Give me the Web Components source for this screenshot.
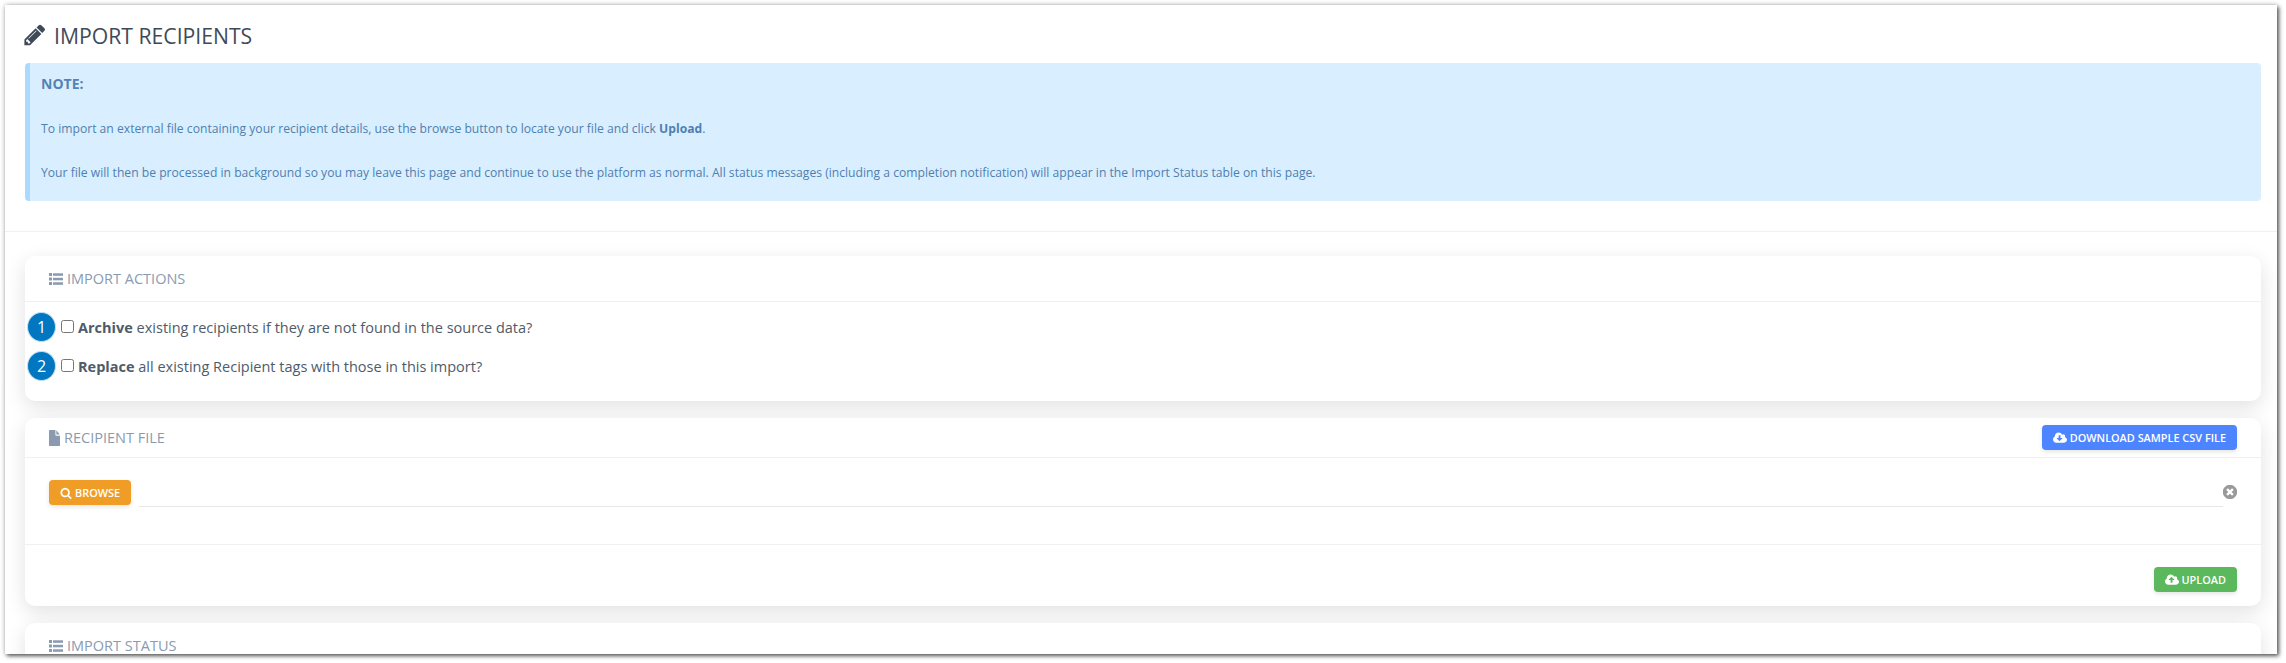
<!DOCTYPE html>
<html><head><meta charset="utf-8">
<style>
html,body{margin:0;padding:0;background:#fff;height:663px;overflow:hidden}
body{font-family:"Open Sans","Liberation Sans",sans-serif;padding:5px 0 0 5px;box-sizing:border-box}
</style></head><body>
<template id="t-window"><style>
:host{display:block;width:2272px;height:649px;background:#fff;overflow:hidden;box-sizing:border-box;padding:0 16px 0 20px;box-shadow:2px 2px 4px rgba(0,0,0,.6),0 0 5px rgba(0,0,0,.25)}
</style><slot></slot></template>

<template id="t-title"><style>
:host{display:flex;align-items:center;gap:8px;height:58px;padding-top:2px;box-sizing:border-box;color:#3f4a59;font-size:21.2px;font-weight:400}
svg{width:22px;height:22px;fill:#3f4a59;flex:none;margin-left:-1px}
</style><svg viewBox="100 100 1620 1620"><path d="M491 1536l91-91-235-235-91 91v107h128v128h107zm523-928q0-22-22-22-10 0-17 7l-542 542q-7 7-7 17 0 22 22 22 10 0 17-7l542-542q7-7 7-17zm-54-192l416 416-832 832h-416v-416zm683 96q0 53-37 90l-166 166-416-416 166-165q36-38 90-38 53 0 91 38l235 234q37 39 37 91z"/></svg><slot></slot></template>

<template id="t-note"><style>
:host{display:flex;flex-direction:column;height:138px;box-sizing:border-box;background:#d9efff;border-left:5px solid #aadbff;border-radius:4px;padding:12px 11px;color:#4f7fb0;font-size:12.15px;line-height:18px}
::slotted(h4){margin:0 0 27px;font-size:14px;font-weight:700;line-height:18px;color:#5383b5}
::slotted(p){margin:0 0 26px}
::slotted(p:last-child){margin:0}
</style><slot></slot></template>

<template id="t-hr"><style>
:host{display:block;height:1px;background:#f0f1f3;margin:30px -16px 24px -20px}
</style></template>

<template id="t-card"><style>
:host{display:block;background:#fff;border-radius:10px;box-shadow:0 6px 20px rgba(0,0,0,.12);margin-bottom:17px;flex:none}
header{display:flex;align-items:center;justify-content:space-between;box-sizing:border-box;height:var(--head,46px);padding:0 24px;border-bottom:1px solid #eef0f2}
.t{display:flex;align-items:center;gap:var(--tgap,4px);color:#8a9bb0;font-size:14.5px}
::slotted(svg){width:var(--ts,14px);height:16px;fill:#8a9bb0;flex:none}
</style><header><div class="t"><slot name="icon"></slot><slot name="title"></slot></div><slot name="action"></slot></header><slot></slot></template>

<template id="t-option"><style>
:host{display:block;position:relative;height:40px;padding-left:36px;box-sizing:border-box;font-size:14.5px;color:#4e5b6a}
.n{position:absolute;left:2px;top:0;width:29px;height:30px;border-radius:50%;background:#0077c0;border:1px solid #bfe0f5;box-sizing:border-box;color:#fff;font-size:16px;display:flex;align-items:center;justify-content:center}
label{display:flex;align-items:center;gap:4px;height:30px;margin-top:var(--lift,0)}
input{margin:0;width:13px;height:13px;flex:none;position:relative;top:-1px}
::slotted(b){font-weight:700}
</style><span class="n"><slot name="n"></slot></span><label><input type="checkbox"><span><slot></slot></span></label></template>

<template id="t-btn"><style>
:host{display:inline-flex;align-items:center;justify-content:center;gap:3px;height:25px;box-sizing:border-box;border-radius:4px;padding:0 11px;font-size:10.9px;font-weight:600;color:#fff;background:var(--bg,#4d84ff);box-shadow:0 2px 4px rgba(0,0,0,.1);white-space:nowrap}
::slotted(svg){width:var(--iw,14px);height:14px;fill:#fff;flex:none}
</style><slot></slot></template>

<template id="t-filepick"><style>
:host{display:flex;align-items:flex-start;padding:22px 24px 0;height:87px;box-sizing:border-box;border-bottom:1px solid #eef0f2}
.line{flex:1;height:26px;margin-left:8px;border-bottom:1px solid #e6e7e9}
svg{width:14px;height:14px;fill:#9a9a9a;flex:none;margin-top:5px}
</style><slot></slot><div class="line"></div><svg viewBox="150 150 1500 1500"><path d="M1277 1122q0-26-19-45l-181-181 181-181q19-19 19-45 0-27-19-46l-90-90q-19-19-46-19-26 0-45 19l-181 181-181-181q-19-19-45-19-27 0-46 19l-90 90q-19 19-19 46 0 26 19 45l181 181-181 181q-19 19-19 45 0 27 19 46l90 90q19 19 46 19 26 0 45-19l181-181 181 181q19 19 45 19 27 0 46-19l90-90q19-19 19-46zm387-226q0 209-103 385.5t-279.5 279.5-385.5 103-385.5-103-279.5-279.5-103-385.5 103-385.5 279.5-279.5 385.5-103 385.5 103 279.5 279.5 103 385.5z"/></svg></template>

<template id="t-footer"><style>
:host{display:flex;justify-content:flex-end;align-items:flex-start;height:61px;padding:22px 24px 0;box-sizing:border-box}
</style><slot></slot></template>

<template id="t-body"><style>:host{display:block;padding:10px 0 0;height:99px;box-sizing:border-box}</style><slot></slot></template>

<script>
for(const [tag,id] of [['app-window','t-window'],['page-title','t-title'],['note-box','t-note'],['rule-line','t-hr'],['info-card','t-card'],['option-row','t-option'],['ui-btn','t-btn'],['file-pick','t-filepick'],['card-footer','t-footer'],['card-body','t-body']]){
  customElements.define(tag,class extends HTMLElement{constructor(){super();this.attachShadow({mode:'open'}).appendChild(document.getElementById(id).content.cloneNode(true));}});
}
</script>

<app-window>
  <page-title>IMPORT RECIPIENTS</page-title>
  <note-box>
    <h4>NOTE:</h4>
    <p>To import an external file containing your recipient details, use the browse button to locate your file and click <b>Upload</b>.</p>
    <p>Your file will then be processed in background so you may leave this page and continue to use the platform as normal. All status messages (including a completion notification) will appear in the Import Status table on this page.</p>
  </note-box>
  <rule-line></rule-line>
  <info-card>
    <svg slot="icon" viewBox="0 0 14 16"><rect x="0" y="2" width="3" height="3"/><rect x="0" y="6.500" width="3" height="3"/><rect x="0" y="11" width="3" height="3"/><rect x="4" y="2.300" width="10" height="2.500"/><rect x="4" y="6.800" width="10" height="2.500"/><rect x="4" y="11.300" width="10" height="2.500"/></svg>
    <span slot="title">IMPORT ACTIONS</span>
    <card-body>
      <option-row><span slot="n">1</span><b>Archive</b> existing recipients if they are not found in the source data?</option-row>
      <option-row style="--lift:-1px"><span slot="n">2</span><b>Replace</b> all existing Recipient tags with those in this import?</option-row>
    </card-body>
  </info-card>
  <info-card style="--head:40px;--ts:11px">
    <svg slot="icon" viewBox="128 0 1536 1792" preserveAspectRatio="none"><path d="M1152 512v-472q22 14 36 28l408 408q14 14 28 36h-472zm-128 32q0 40 28 68t68 28h544v1056q0 40-28 68t-68 28h-1344q-40 0-68-28t-28-68v-1600q0-40 28-68t68-28h800v544z"/></svg>
    <span slot="title">RECIPIENT FILE</span>
    <ui-btn slot="action"><svg viewBox="0 0 1920 1792"><path d="M1280 928q0-14-9-23t-23-9h-224v-352q0-13-9.500-22.500t-22.500-9.500h-192q-13 0-22.500 9.500t-9.500 22.500v352h-224q-13 0-22.500 9.500t-9.500 22.500q0 14 9 23l352 352q9 9 23 9t23-9l351-351q10-12 10-24zm640 224q0 159-112.500 271.500t-271.500 112.500h-1088q-185 0-316.500-131.500t-131.500-316.500q0-130 70-240t188-165q-2-30-2-43 0-212 150-362t362-150q156 0 285.500 87t188.500 231q71-62 166-62 106 0 181 75t75 181q0 76-41 138 130 31 213.500 135.500t83.500 238.500z"/></svg>DOWNLOAD SAMPLE CSV FILE</ui-btn>
    <file-pick><ui-btn style="--bg:#ef9d26;--iw:12px"><svg viewBox="0 0 1792 1792"><path d="M1216 832q0-185-131.500-316.500t-316.500-131.500-316.500 131.500-131.500 316.500 131.500 316.500 316.500 131.500 316.500-131.500 131.500-316.500zm512 832q0 52-38 90t-90 38q-54 0-90-38l-343-342q-179 124-399 124-143 0-273.500-55.500t-225-150-150-225-55.500-273.500 55.500-273.500 150-225 225-150 273.500-55.500 273.500 55.500 225 150 150 225 55.500 273.500q0 220-124 399l343 343q37 37 37 90z"/></svg>BROWSE</ui-btn></file-pick>
    <card-footer><ui-btn style="--bg:#5cb85c"><svg viewBox="0 0 1920 1792"><path d="M1280 864q0-14-9-23l-352-352q-9-9-23-9t-23 9l-351 351q-10 12-10 24 0 14 9 23t23 9h224v352q0 13 9.500 22.500t22.500 9.500h192q13 0 22.500-9.500t9.500-22.500v-352h224q13 0 22.500-9.500t9.500-22.500zm640 288q0 159-112.500 271.500t-271.500 112.500h-1088q-185 0-316.500-131.500t-131.500-316.500q0-130 70-240t188-165q-2-30-2-43 0-212 150-362t362-150q156 0 285.500 87t188.500 231q71-62 166-62 106 0 181 75t75 181q0 76-41 138 130 31 213.500 135.500t83.500 238.500z"/></svg>UPLOAD</ui-btn></card-footer>
  </info-card>
  <info-card>
    <svg slot="icon" viewBox="0 0 14 16"><rect x="0" y="2" width="3" height="3"/><rect x="0" y="6.500" width="3" height="3"/><rect x="0" y="11" width="3" height="3"/><rect x="4" y="2.300" width="10" height="2.500"/><rect x="4" y="6.800" width="10" height="2.500"/><rect x="4" y="11.300" width="10" height="2.500"/></svg>
    <span slot="title">IMPORT STATUS</span>
  </info-card>
</app-window>
</body></html>
